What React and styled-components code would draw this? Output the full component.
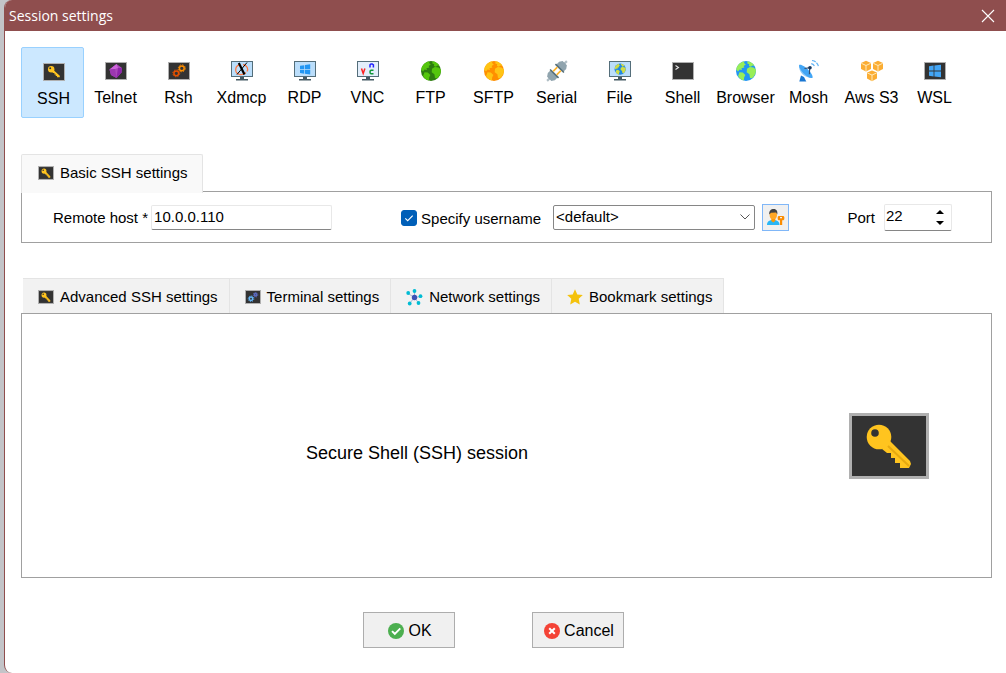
import React, { useState } from "react";
import styled, { createGlobalStyle, css } from "styled-components";

const sans = '"Liberation Sans", Arial, sans-serif';

const GlobalStyle = createGlobalStyle`
  *, *::before, *::after { box-sizing: border-box; }
  body { margin: 0; background: #c3c4c8; color: #000; font-family: ${sans}; }
  button, input, select { font: inherit; color: inherit; margin: 0; }
  svg { display: block; flex: none; }
`;

const Window = styled.div`
  display: flex;
  flex-direction: column;
  min-height: 100vh;
  margin-left: 4px;
  background: #fff;
  border-left: 1px solid #8f4e4e;
  border-radius: 8px 0 0 8px;
  overflow: hidden;
`;

const TitleBar = styled.header`
  display: flex;
  align-items: center;
  justify-content: space-between;
  height: 31px;
  padding: 0 11px 0 4px;
  background: #8f4e4e;
  color: #fff;
`;

const Title = styled.h1`
  margin: 0;
  font: 400 14px/20px "Open Sans", "Noto Sans", sans-serif;
`;

const CloseButton = styled.button`
  display: flex;
  padding: 0;
  border: 0;
  background: none;
`;

const Content = styled.main`
  display: flex;
  flex-direction: column;
  padding: 16px 14px 24px 16px;
`;

const Toolbar = styled.nav`
  display: flex;
  flex-wrap: wrap;
  margin-bottom: 36px;
`;

const ToolButton = styled.button`
  display: flex;
  flex-direction: column;
  align-items: center;
  gap: 6px;
  width: 63px;
  height: 71px;
  padding: ${(p) => (p.$active ? "13px 0 0 2px" : "12px 0 0")};
  border: 1px solid ${(p) => (p.$active ? "#99d1ff" : "transparent")};
  border-radius: 2px;
  background: ${(p) => (p.$active ? "#cce8ff" : "none")};
  font-size: 16px;
  line-height: 20px;
  white-space: nowrap;
`;

const TabList = styled.div`
  display: flex;
`;

const Tab = styled.button`
  display: flex;
  align-items: center;
  gap: 6px;
  border: 1px solid #e4e4e4;
  font-size: 15px;
  line-height: 20px;
  white-space: nowrap;
  ${(p) =>
    p.$selected
      ? css`
          height: 39px;
          margin-bottom: -2px;
          padding: 0 14px 2px 16px;
          border-bottom: 0;
          border-radius: 2px 2px 0 0;
          background: #f9f9f9;
          z-index: 1;
        `
      : css`
          height: 35px;
          padding: 2px 11px 0 15px;
          border-width: 1px 1px 0 0;
          background: #f2f2f2;
        `}
`;

const LowerTabs = styled(TabList)`
  margin: 35px 0 0 2px;
`;

const FieldsPanel = styled.section`
  display: flex;
  align-items: center;
  min-height: 52px;
  padding: 0 39px 0 31px;
  border: 1px solid #a0a0a0;
  font-size: 15px;
`;

const Field = styled.div`
  display: flex;
  align-items: center;
  gap: ${(p) => p.$gap}px;
`;

const UserField = styled(Field)`
  margin-left: 69px;
`;

const PortField = styled(Field)`
  margin-left: auto;
`;

const TextInput = styled.input`
  width: 181px;
  height: 25px;
  padding: 0 2px 1px;
  border: 1px solid #e8e8e8;
  border-bottom-color: #868686;
  border-radius: 2px;
  background: #fff;
  outline: 0;
`;

const CheckLabel = styled.label`
  display: flex;
  align-items: center;
  gap: 4px;
  margin-right: 5px;
  padding-top: 2px;
  white-space: nowrap;
`;

const CheckMark = styled.span`
  display: grid;
  width: 16px;
  height: 16px;
  & > * { grid-area: 1 / 1; }
  svg { pointer-events: none; }
`;

const CheckInput = styled.input`
  appearance: none;
  width: 16px;
  height: 16px;
  border: 1px solid #005fb8;
  border-radius: 3px;
  background: #fff;
  &:checked { background: #005fb8; }
`;

const SelectBox = styled.div`
  display: grid;
  align-items: center;
  & > * { grid-area: 1 / 1; }
  svg { justify-self: end; margin-right: 5px; pointer-events: none; }
`;

const Select = styled.select`
  appearance: none;
  width: 202px;
  height: 25px;
  padding: 0 24px 1px 2px;
  border: 1px solid #868686;
  border-radius: 2px;
  background: #fff;
`;

const UserButton = styled.button`
  display: grid;
  place-items: center;
  width: 27px;
  height: 27px;
  padding: 0;
  border: 1px solid #80b7f8;
  background: #f0f0f0;
`;

const SpinBox = styled.div`
  display: flex;
  width: 68px;
  height: 27px;
  padding-right: 5px;
  border: 1px solid #e8e8e8;
  border-bottom-color: #868686;
  border-radius: 2px;
`;

const SpinInput = styled.input`
  flex: 1;
  min-width: 0;
  padding: 0 0 3px 1px;
  border: 0;
  background: none;
  outline: 0;
  appearance: textfield;
  &::-webkit-inner-spin-button { appearance: none; }
`;

const SpinArrows = styled.div`
  display: flex;
  flex-direction: column;
  justify-content: center;
  gap: 3px;
`;

const SpinButton = styled.button`
  padding: 2px;
  border: 0;
  background: none;
`;

const InfoPanel = styled.section`
  display: flex;
  align-items: center;
  min-height: 265px;
  padding-right: 62px;
  border: 1px solid #a0a0a0;
`;

const InfoText = styled.p`
  flex: 1;
  margin: 0 37px 0 0;
  padding-top: 14px;
  font-size: 18px;
  line-height: 24px;
  text-align: center;
`;

const Footer = styled.footer`
  display: flex;
  justify-content: center;
  gap: 77px;
  margin-top: 34px;
  padding-right: 26px;
`;

const DialogButton = styled.button`
  display: flex;
  align-items: center;
  justify-content: center;
  gap: 4px;
  width: 92px;
  height: 36px;
  padding: 1px 0 0 2px;
  border: 1px solid #adadad;
  background: #f0f0f0;
  font-size: 16px;
`;

function Icon({ children, ...rest }) {
  return (
    <svg width="22" height="22" viewBox="0 0 22 22" aria-hidden="true" {...rest}>
      {children}
    </svg>
  );
}

const Screen = () => (
  <rect x="0.5" y="2.5" width="21" height="17" fill="#333" stroke="#b0b0b0" />
);

function KeyIcon({ width, height }) {
  const edge = width > 40 ? 3 : 5;
  return (
    <svg width={width} height={height} viewBox="0 0 80 66" preserveAspectRatio="none" aria-hidden="true">
      <rect width="80" height="66" fill="#b0b0b0" />
      <rect x={edge} y={edge} width={80 - 2 * edge} height={66 - 2 * edge} fill="#333" />
      <path fill="#ffc41f" d="M40 27 61 48 62 51 60 55H51V50H46V45H42V40H38L33 36Z" />
      <path fill="none" stroke="#e6a910" strokeWidth="2" d="M39 33 60 53" />
      <circle cx="30" cy="24" r="12.3" fill="#ffc41f" />
      <circle cx="26" cy="20" r="3.8" fill="#333" />
    </svg>
  );
}

const SshIcon = () => (
  <Icon>
    <Screen />
    <path fill="#ffc41f" d="m11 9.5 5.8 5.2v1.6H14v-1.4h-1.3v-1.4h-1.3V12H10L9 10.8Z" />
    <circle cx="8.2" cy="8.3" r="3.2" fill="#ffc41f" />
    <circle cx="7.2" cy="7.3" r="1" fill="#333" />
  </Icon>
);

const TelnetIcon = () => (
  <Icon>
    <Screen />
    <path fill="#ab47bc" d="m11.500 4 5.5 4-.5 4.500L11.500 18 6 15l-1.500-5.500Z" />
    <path fill="#ce65dc" d="M11.500 4 4.500 9.500 10 9l3-1Z" />
    <path fill="#8e24aa" d="m13 8 4 0-.5 4.500L11.500 18Z" />
    <path fill="#9c37b0" d="m4.500 9.500 5.500-.5 1.500 9-5.500-3Z" />
  </Icon>
);

function Gear({ cx, cy, r, color }) {
  return (
    <g fill="none" stroke={color}>
      <circle cx={cx} cy={cy} r={r} strokeWidth="1.5" />
      <circle cx={cx} cy={cy} r={r + 1.1} strokeWidth="1" strokeDasharray={`${(r + 1.1) * 0.39} ${(r + 1.1) * 0.395}`} />
    </g>
  );
}

const RshIcon = () => (
  <Icon>
    <Screen />
    <Gear cx={8.3} cy={13.3} r={2.4} color="#e65100" />
    <Gear cx={13.8} cy={8.3} r={2.4} color="#fb8c00" />
  </Icon>
);

function Monitor({ screen = "#bbdefb", children }) {
  return (
    <Icon>
      <path fill="#455a64" d="M9 17h4v2h4v1.5H5V19h4Z" />
      <rect x="0.5" y="1.5" width="21" height="15" fill={screen} stroke="#546e7a" />
      {children}
    </Icon>
  );
}

const XdmcpIcon = () => (
  <Monitor>
    <path fill="none" stroke="#ff7a45" strokeWidth="1.3" d="M8 4.800C3.500 7 3.500 13 8.500 14.500c3 .6 5-.5 6.500-2M12 4.500c4.500 1 5.500 4.500 4 7" />
    <path stroke="#000" strokeWidth="2.2" d="m7.800 3 5.700 11.500" />
    <path stroke="#000" strokeWidth="1" d="M16 2.500 6 14.500" />
  </Monitor>
);

const RdpIcon = () => (
  <Monitor>
    <path fill="#2196f3" d="m6 5.800 4.300-.6v3.900H6Zm5-.7 5.200-.8v4.800H11ZM6 9.800h4.300v3.900L6 13.100Zm5 0h5.200v4.800L11 13.800Z" />
  </Monitor>
);

const VncIcon = () => (
  <Monitor screen="#e3eefb">
    <g fill="none" strokeWidth="1.5">
      <path stroke="#f22" d="m4.500 8.500 1.700 5 1.700-5" />
      <path stroke="#22f" d="M13 7.500V4.800L14 4h1.200l1.200.8v2.700" />
      <path stroke="#11983b" d="M16.500 10.300H14l-.9.8v1.800l.9.8h2.500" />
    </g>
  </Monitor>
);

function Earth({ sea, land }) {
  return (
    <g>
      <circle cx="11" cy="11" r="10" fill={sea} />
      <g fill={land}>
        <path d="M3.200 5C5 2.700 7 1.600 9.500 1.200L9 3l1.800 1.500L8.600 6l.8 1.400-3 .8L7 10 4.600 9.600 3 11.500 1.200 9.500C1.500 7.800 2 6.400 3.200 5Z" />
        <path d="m4.500 12.200 3.300.2 2.600 2.500-1.200 2.400-.4 3.200c-3-.8-4.800-2.800-5.700-4.600Z" />
        <path d="M12.500 1.200c3 .5 5.500 2 7 4.500l-2-.3-1.600 1.300-2-.8.3-1.600-1.900-.9Z" />
        <path d="m12 8.700 2.800-1.700 3.700.4 2.400 2c.3 3.200-1.200 6.500-3.900 8.900l-2-.4-.6-3.700-2.700-2Z" />
      </g>
    </g>
  );
}

const Globe = ({ sea, land }) => (
  <Icon>
    <Earth sea={sea} land={land} />
  </Icon>
);

const SerialIcon = () => (
  <Icon>
    <g transform="rotate(45 11 11)">
      <path stroke="#b0bec5" strokeWidth="2.2" d="M11-3V3M11 19v6" />
      <path fill="#90a4ae" d="M6 7V3l2-3h6l2 3v4ZM6 15v4l2 3h6l2-3v-4Z" />
      <path stroke="#546e7a" strokeWidth="1.6" d="M5 7.200h12M5 14.800h12" />
      <path stroke="#ffb52b" strokeWidth="1.7" d="M8.500 8v6M13.500 8v6" />
    </g>
  </Icon>
);

const FileIcon = () => (
  <Monitor>
    <g transform="translate(5 3) scale(.56)">
      <Earth sea="#1e88e5" land="#d0dc45" />
    </g>
  </Monitor>
);

const ShellIcon = () => (
  <Icon>
    <Screen />
    <path fill="none" stroke="#e8e8e8" strokeWidth="1.1" d="m3.500 5.500 3 2-3 2" />
  </Icon>
);

const MoshIcon = () => (
  <Icon>
    <path fill="#1976d2" d="m3 15.500-1.700 6h7L6 17Z" />
    <path fill="#90caf9" d="M1 5c-.7 7 5.700 13.600 13.500 12.800Z" />
    <path fill="#42a5f5" d="M1 5C4 2.500 16 13.500 14.500 17.800 11 19.500 1 11 1 5Z" />
    <path stroke="#37506f" strokeWidth="1.1" d="m6.500 8.500 5.200-.8-.3 6.500" fill="none" />
    <circle cx="12" cy="7.800" r="1.800" fill="#17365d" />
    <path fill="none" stroke="#64b5f6" strokeWidth="1.2" strokeDasharray="4 1" d="M13.200 3.600c1.800.3 3.200 1.600 3.600 3.400M14 .5c3.500.5 6 3 6.600 6.500" />
  </Icon>
);

const Cube = ({ x, y }) => (
  <g transform={`translate(${x} ${y})`}>
    <path fill="#fbad33" d="M5 0 10 2.200v6L5 10.800 0 8.200v-6Z" />
    <path fill="none" stroke="#fff0c8" strokeWidth=".9" d="M.3 2.500 5 4.700l4.700-2.200M5 4.700v5.800" />
  </g>
);

const AwsIcon = () => (
  <Icon>
    <Cube x={0} y={0.800} />
    <Cube x={12} y={0.800} />
    <Cube x={6} y={10.400} />
  </Icon>
);

const WslIcon = () => (
  <Icon>
    <Screen />
    <path fill="#42a5f5" d="m5 6.200 4.600-.6v5H5Zm5.400-.7L17 4.700v5.900h-6.600ZM5 11.400h4.600v5L5 15.800Zm5.400 0H17v5.900l-6.600-.8Z" />
  </Icon>
);

const TerminalIcon = () => (
  <svg width="16" height="14" viewBox="0 0 16 14" aria-hidden="true">
    <rect x="0.5" y="0.5" width="15" height="13" fill="#333" stroke="#b0b0b0" />
    <Gear cx={6} cy={8.800} r={1.700} color="#64b5f6" />
    <Gear cx={10.500} cy={4.800} r={1.200} color="#5c6bc0" />
  </svg>
);

const NetworkIcon = () => (
  <svg width="17" height="17" viewBox="0 0 17 17" aria-hidden="true">
    <path stroke="#a9b8d8" d="M8.500 8.500 8.500 2M8.500 8.500 2 4.500M8.500 8.500l6-1M8.500 8.500 3.500 14.500M8.500 8.500l4 5.500" />
    <g fill="#00bcd4">
      <circle cx="8.500" cy="2" r="1.900" />
      <circle cx="2.200" cy="4" r="1.900" />
      <circle cx="14.500" cy="7.200" r="1.900" />
      <circle cx="3.700" cy="14.500" r="1.900" />
      <circle cx="12.500" cy="14" r="1.900" />
    </g>
    <circle cx="8.500" cy="8.500" r="2.700" fill="#3f51b5" />
  </svg>
);

const StarIcon = () => (
  <svg width="16" height="16" viewBox="0 0 16 16" aria-hidden="true">
    <path fill="#f4c20d" d="m8 .3 2.300 5.200 5.500.6-4.100 3.700 1.100 5.600L8 12.700l-4.800 2.700 1.100-5.600L.2 6.100l5.500-.6Z" />
  </svg>
);

const UserKeyIcon = () => (
  <svg width="18" height="16" viewBox="0 0 18 16" aria-hidden="true">
    <path fill="#29b6f6" d="M0 16c0-3.500 2-5 6.200-5s6.300 1.500 6.300 5Z" />
    <path fill="#ff9800" d="M4.300 8.500h4V12l-2 1.500-2-1.500Z" />
    <ellipse cx="6.300" cy="6" rx="3.700" ry="4.200" fill="#ffa726" />
    <path fill="#424242" d="M2.300 5.500C1.800 2 3.800 0 6.800 0c2.800 0 4 2.300 3.500 5.500L9 3.600 4 3.800Z" />
    <path fill="#fb8c00" d="M11.500 7h5l.8 1v2.300l-.8 1h-1.300V16H13v-4.700h-1.500l-.8-1V8Z" />
    <path fill="#f0f0f0" d="M13 8h2v1.200h-2Z" />
  </svg>
);

const OkIcon = () => (
  <svg width="16" height="16" viewBox="0 0 16 16" aria-hidden="true">
    <circle cx="8" cy="8" r="8" fill="#4caf50" />
    <path fill="none" stroke="#fff" strokeWidth="1.900" d="m4 8.100 2.800 2.700 5.500-5.500" />
  </svg>
);

const CancelIcon = () => (
  <svg width="16" height="16" viewBox="0 0 16 16" aria-hidden="true">
    <circle cx="8" cy="8" r="8" fill="#f44336" />
    <path stroke="#fff" strokeWidth="2" d="m5.200 5.200 5.600 5.600m0-5.600-5.600 5.600" />
  </svg>
);

const sessions = [
  ["SSH", <SshIcon />],
  ["Telnet", <TelnetIcon />],
  ["Rsh", <RshIcon />],
  ["Xdmcp", <XdmcpIcon />],
  ["RDP", <RdpIcon />],
  ["VNC", <VncIcon />],
  ["FTP", <Globe sea="#2e7d10" land="#55c60d" />],
  ["SFTP", <Globe sea="#ff8f00" land="#ffc414" />],
  ["Serial", <SerialIcon />],
  ["File", <FileIcon />],
  ["Shell", <ShellIcon />],
  ["Browser", <Globe sea="#2196f3" land="#98ee58" />],
  ["Mosh", <MoshIcon />],
  ["Aws S3", <AwsIcon />],
  ["WSL", <WslIcon />],
];

const settingsTabs = [
  ["Advanced SSH settings", <KeyIcon width={16} height={14} />],
  ["Terminal settings", <TerminalIcon />],
  ["Network settings", <NetworkIcon />],
  ["Bookmark settings", <StarIcon />],
];

export default function App() {
  const [session, setSession] = useState("SSH");
  const [host, setHost] = useState("10.0.0.110");
  const [named, setNamed] = useState(true);
  const [port, setPort] = useState(22);

  return (
    <>
      <GlobalStyle />
      <Window>
        <TitleBar>
          <Title>Session settings</Title>
          <CloseButton type="button" aria-label="Close">
            <svg width="14" height="14" viewBox="0 0 14 14" aria-hidden="true">
              <path stroke="#fff" strokeWidth="1.100" d="m1 1 12 12M13 1 1 13" />
            </svg>
          </CloseButton>
        </TitleBar>
        <Content>
          <Toolbar aria-label="Session type">
            {sessions.map(([name, icon]) => (
              <ToolButton key={name} type="button" $active={name === session} onClick={() => setSession(name)}>
                {icon}
                <span>{name}</span>
              </ToolButton>
            ))}
          </Toolbar>

          <TabList role="tablist">
            <Tab type="button" role="tab" aria-selected="true" $selected>
              <KeyIcon width={16} height={14} />
              Basic SSH settings
            </Tab>
          </TabList>
          <FieldsPanel>
            <Field $gap={3}>
              <label htmlFor="host">Remote host *</label>
              <TextInput id="host" value={host} onChange={(e) => setHost(e.target.value)} />
            </Field>
            <UserField $gap={7}>
              <CheckLabel>
                <CheckMark>
                  <CheckInput type="checkbox" checked={named} onChange={(e) => setNamed(e.target.checked)} />
                  <svg width="16" height="16" viewBox="0 0 16 16" aria-hidden="true">
                    <path fill="none" stroke="#fff" strokeWidth="1.100" d="m4.300 8.300 2.400 2.400 5-5" />
                  </svg>
                </CheckMark>
                Specify username
              </CheckLabel>
              <SelectBox>
                <Select aria-label="Username">
                  <option>&lt;default&gt;</option>
                </Select>
                <svg width="10" height="6" viewBox="0 0 10 6" aria-hidden="true">
                  <path fill="none" stroke="#555" d="m.5.5 4.500 4.500L9.500.5" />
                </svg>
              </SelectBox>
              <UserButton type="button" aria-label="Manage users">
                <UserKeyIcon />
              </UserButton>
            </UserField>
            <PortField $gap={9}>
              <label htmlFor="port">Port</label>
              <SpinBox>
                <SpinInput id="port" type="number" value={port} onChange={(e) => setPort(Number(e.target.value))} />
                <SpinArrows>
                  <SpinButton type="button" aria-label="Increase port" onClick={() => setPort(port + 1)}>
                    <svg width="8" height="4" viewBox="0 0 8 4" aria-hidden="true"><path d="M0 4 4 0l4 4Z" /></svg>
                  </SpinButton>
                  <SpinButton type="button" aria-label="Decrease port" onClick={() => setPort(port - 1)}>
                    <svg width="8" height="4" viewBox="0 0 8 4" aria-hidden="true"><path d="m0 0 4 4 4-4Z" /></svg>
                  </SpinButton>
                </SpinArrows>
              </SpinBox>
            </PortField>
          </FieldsPanel>

          <LowerTabs role="tablist">
            {settingsTabs.map(([name, icon]) => (
              <Tab key={name} type="button" role="tab" aria-selected="false">
                {icon}
                {name}
              </Tab>
            ))}
          </LowerTabs>
          <InfoPanel>
            <InfoText>Secure Shell (SSH) session</InfoText>
            <KeyIcon width={80} height={66} />
          </InfoPanel>

          <Footer>
            <DialogButton type="button"><OkIcon />OK</DialogButton>
            <DialogButton type="button"><CancelIcon />Cancel</DialogButton>
          </Footer>
        </Content>
      </Window>
    </>
  );
}
